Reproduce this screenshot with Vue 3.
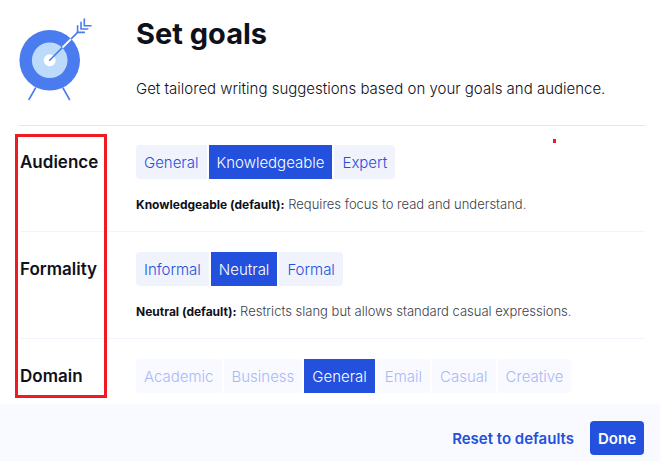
<script setup>
import { reactive } from 'vue'

const defaults = { audience: 'Knowledgeable', formality: 'Neutral', domain: 'General' }
const chosen = reactive({ ...defaults })

const goals = [
  {
    id: 'audience',
    label: 'Audience',
    options: ['General', 'Knowledgeable', 'Expert'],
    notes: {
      Knowledgeable: ['Knowledgeable (default):', 'Requires focus to read and understand.'],
    },
  },
  {
    id: 'formality',
    label: 'Formality',
    options: ['Informal', 'Neutral', 'Formal'],
    notes: {
      Neutral: ['Neutral (default):', 'Restricts slang but allows standard casual expressions.'],
    },
  },
  {
    id: 'domain',
    label: 'Domain',
    options: ['Academic', 'Business', 'General', 'Email', 'Casual', 'Creative'],
    locked: true,
    notes: {},
  },
]

function reset() {
  Object.assign(chosen, defaults)
}
</script>

<template>
  <main class="dialog">
    <header class="intro">
      <svg class="target" viewBox="0 0 76 86" aria-hidden="true">
        <g fill="none" stroke="#4a7cf0" stroke-width="1.6" stroke-linecap="round">
          <path d="M16.500 73 10 84.500M44 73l6.500 11.500" />
        </g>
        <circle cx="30.700" cy="45.300" r="30.300" fill="#4a7cf0" />
        <circle cx="30.700" cy="45.300" r="17.800" fill="#bcdaf9" />
        <circle cx="30.700" cy="45.300" r="6" fill="#fff" />
        <g fill="none" stroke="#4a7cf0" stroke-width="1.600" stroke-linecap="round">
          <path d="M30.700 45.300 58.600 17.400" />
          <path d="M58.600 10.700v6.700h6.700M62 7.300V14h6.700M65.300 4v6.700H72" />
        </g>
        <path d="M43.500 32.500 52 24" stroke="#fff" stroke-width="1.800" />
      </svg>
      <div>
        <h1>Set goals</h1>
        <p>Get tailored writing suggestions based on your goals and audience.</p>
      </div>
    </header>

    <div class="goals">
      <section v-for="goal in goals" :key="goal.id" class="goal">
        <h2 :id="goal.id">{{ goal.label }}</h2>
        <div>
          <div class="segments" role="group" :aria-labelledby="goal.id">
            <button
              v-for="option in goal.options"
              :key="option"
              type="button"
              class="segment"
              :class="{ active: chosen[goal.id] === option }"
              :aria-pressed="chosen[goal.id] === option"
              :disabled="goal.locked && chosen[goal.id] !== option"
              @click="chosen[goal.id] = option"
            >{{ option }}</button>
          </div>
          <p v-if="goal.notes[chosen[goal.id]]" class="note">
            <strong>{{ goal.notes[chosen[goal.id]][0] }}</strong>
            {{ goal.notes[chosen[goal.id]][1] }}
          </p>
        </div>
      </section>
      <div class="outline"></div>
      <div class="dot"></div>
    </div>

    <footer class="actions">
      <button type="button" class="reset" @click="reset">Reset to defaults</button>
      <button type="button" class="done">Done</button>
    </footer>
  </main>
</template>

<style>
body {
  background: #fff;
}
</style>

<style scoped>
.dialog {
  font-family: Inter, "Liberation Sans", sans-serif;
  color: #0e101a;
  min-height: 100vh;
  display: flex;
  flex-direction: column;
}

h1,
h2,
p {
  margin: 0;
}

button {
  font: inherit;
  border: 0;
  cursor: pointer;
}

.intro {
  display: grid;
  grid-template-columns: 117px 1fr;
  margin: 0 15px 0 19px;
  padding: 15px 0 24px;
  border-bottom: 1px solid #e4e6f2;
}

.target {
  width: 76px;
  height: 86px;
}

h1 {
  font-size: 29px;
  line-height: 38px;
  font-weight: 700;
}

.intro p {
  margin-top: 24px;
  font-size: 15px;
  line-height: 24px;
  font-weight: 300;
  color: #0e101a;
}

.goals {
  position: relative;
  padding: 0 15px 0 20px;
}

.goal {
  display: grid;
  grid-template-columns: 116px 1fr;
  padding: 19px 0 18px;
}

.goal + .goal {
  padding-top: 20px;
  border-top: 1px solid #f0f2fc;
}

.goal:nth-child(3) {
  padding-bottom: 11px;
}

h2 {
  font-size: 17px;
  line-height: 34px;
  font-weight: 600;
}

.segments {
  display: flex;
  gap: 2px;
}

.segment {
  height: 34px;
  padding: 0 8px;
  font-size: 15px;
  font-weight: 300;
  background: #f0f2fc;
  color: #2350dc;
}

.segment:first-child {
  border-radius: 4px 0 0 4px;
}

.segment:last-child {
  border-radius: 0 4px 4px 0;
}

.segment:disabled {
  background: #f9faff;
  color: #a9b9f6;
  cursor: default;
}

.segment.active {
  background: #2350dc;
  color: #fff;
}

.note {
  margin-top: 16px;
  font-size: 13px;
  line-height: 18px;
  font-weight: 300;
  color: #3b3e4a;
}

.note strong {
  font-size: 12px;
  line-height: 1;
  font-weight: 700;
  color: #0e101a;
}

.outline {
  position: absolute;
  top: 8px;
  bottom: 6px;
  left: 15px;
  width: 92px;
  box-sizing: border-box;
  border: 3px solid #ef1a22;
  pointer-events: none;
}

.dot {
  position: absolute;
  top: 13px;
  left: 553px;
  width: 3px;
  height: 4px;
  background: #ef1a22;
}

.actions {
  flex: 1;
  display: flex;
  justify-content: flex-end;
  align-items: flex-start;
  gap: 16px;
  padding: 17px 16px 6px;
  background: #f9faff;
}

.reset,
.done {
  height: 34px;
  font-size: 15px;
  font-weight: 600;
}

.reset {
  padding: 0;
  background: none;
  color: #2350dc;
}

.done {
  padding: 0 8px;
  border-radius: 4px;
  background: #2350dc;
  color: #fff;
}
</style>
